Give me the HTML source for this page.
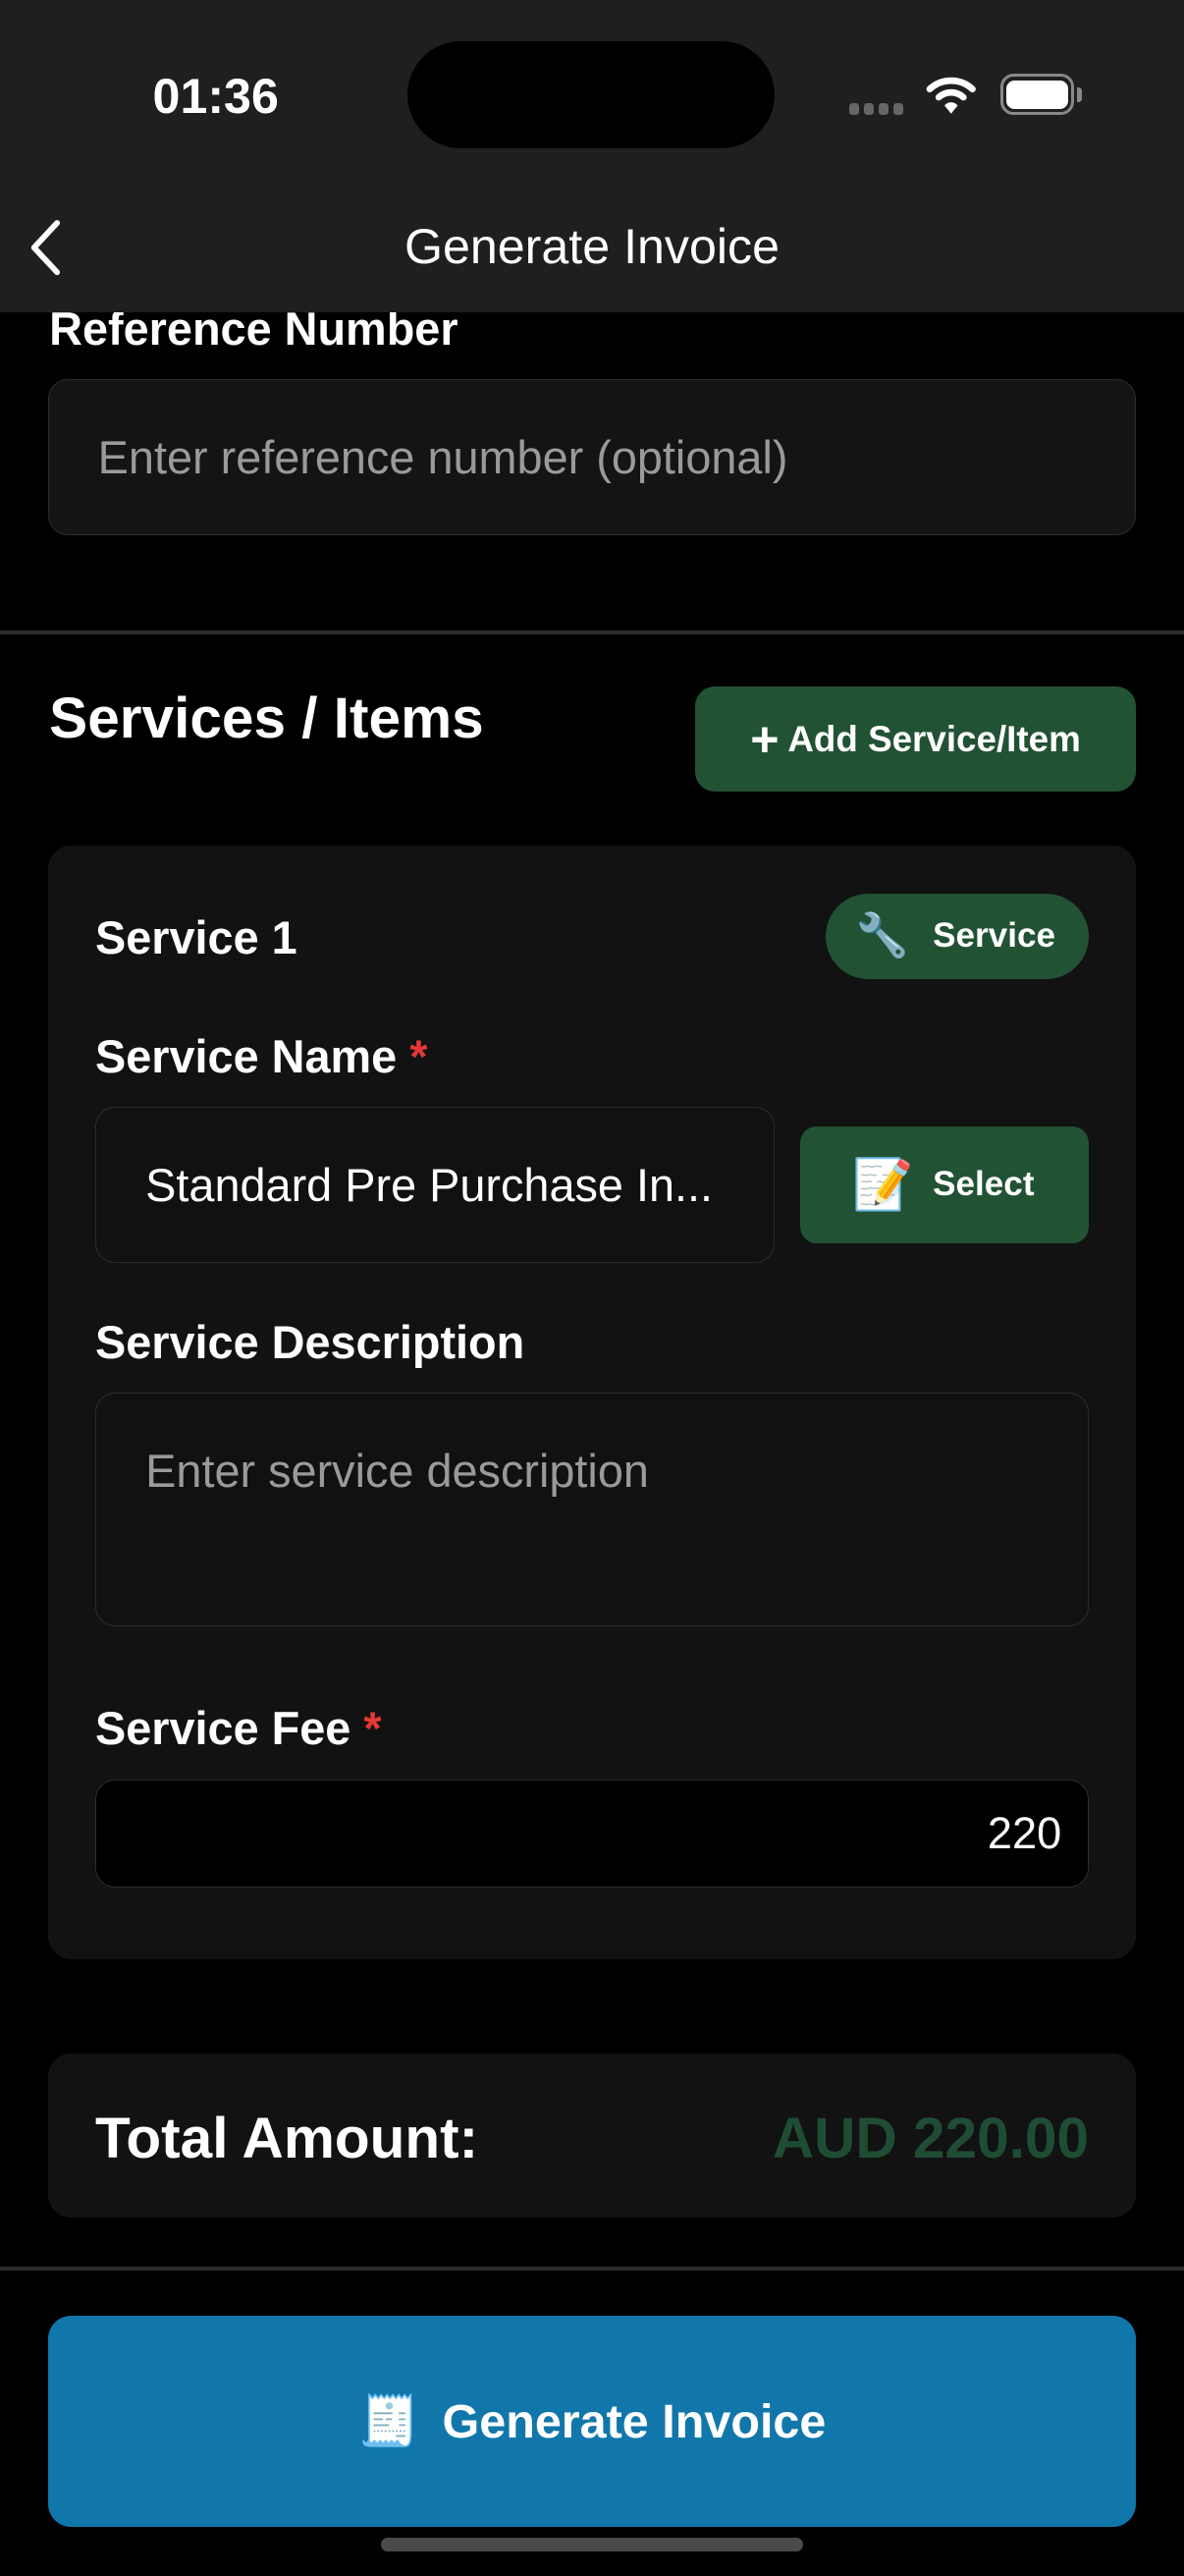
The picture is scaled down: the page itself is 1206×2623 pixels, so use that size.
<!DOCTYPE html>
<html><head><meta charset="utf-8"><style>
html,body{margin:0;padding:0;background:#000;}
body{width:1206px;height:2622px;overflow:hidden;}
#r{width:721px;height:1568px;zoom:1.67268;position:relative;font-family:"Liberation Sans","Noto Sans CJK JP",sans-serif;color:#fff;}
.a{position:absolute;}
.lbl{position:absolute;font-size:28px;font-weight:600;white-space:nowrap;}
.star{color:#e53935;}
.inp{position:absolute;border:1px solid #2c2c2c;border-radius:12px;box-sizing:border-box;}
.ph{color:#9a9a9a;font-size:28px;position:absolute;white-space:nowrap;}
.g{background:#225234;}
</style></head><body><div id="r">
<div class="a" style="left:0;top:0;width:721px;height:190px;background:#1f1f1f;z-index:2">
  <div class="a" style="left:93px;top:41px;font-size:30px;font-weight:600;">01:36</div>
  <div class="a" style="left:248px;top:25px;width:224px;height:65px;background:#000;border-radius:33px;"></div>
  <div class="a" style="left:517px;top:63px;width:34px;height:7px;">
    <span class="a" style="left:0;width:6px;height:7px;background:#666;border-radius:2px"></span>
    <span class="a" style="left:9px;width:6px;height:7px;background:#666;border-radius:2px"></span>
    <span class="a" style="left:18px;width:6px;height:7px;background:#666;border-radius:2px"></span>
    <span class="a" style="left:27px;width:6px;height:7px;background:#666;border-radius:2px"></span>
  </div>
  <svg class="a" style="left:563px;top:44px" width="32" height="26" viewBox="0 0 32 26"><path d="M3 10 A19 19 0 0 1 29 10" stroke="#fff" stroke-width="4" fill="none" stroke-linecap="round"/><path d="M8.5 15 A11 11 0 0 1 23.5 15" stroke="#fff" stroke-width="4" fill="none" stroke-linecap="round"/><path d="M12 20 L16 25 L20 20 A5 5 0 0 0 12 20Z" fill="#fff"/></svg>
  <div class="a" style="left:609px;top:45px;width:45px;height:25px;border:2px solid #888;border-radius:8px;box-sizing:border-box;padding:2px"><div style="width:100%;height:100%;background:#fff;border-radius:5px"></div></div>
  <div class="a" style="left:656px;top:53px;width:3px;height:9px;background:#888;border-radius:0 2px 2px 0"></div>
  <svg class="a" style="left:14px;top:133px" width="26" height="36" viewBox="0 0 26 36"><path d="M21 3 L7 18 L21 33" stroke="#fff" stroke-width="3.5" fill="none" stroke-linecap="round" stroke-linejoin="round"/></svg>
  <div class="a" style="left:0;width:721px;top:133px;text-align:center;font-size:30px;">Generate Invoice</div>
</div>
<div class="lbl" style="left:30px;top:184px;">Reference Number</div>
<div class="inp" style="left:29px;top:231px;width:663px;height:95px;background:#141414;"><div class="ph" style="left:30px;top:31px;">Enter reference number (optional)</div></div>
<div class="a" style="left:0;top:384px;width:721px;height:2px;background:#2a2a2a"></div>
<div class="a" style="left:30px;top:417px;font-size:35px;font-weight:700;">Services / Items</div>
<div class="a g" style="left:423px;top:418px;width:269px;height:64px;border-radius:12px;font-size:22px;font-weight:600;line-height:64px;text-align:center;"><span style="font-size:30px;font-weight:700;vertical-align:-3px">+</span> Add Service/Item</div>
<div class="a" style="left:29px;top:515px;width:663px;height:678px;background:#121212;border-radius:14px;"></div>
<div class="lbl" style="left:58px;top:555px;">Service 1</div>
<div class="a g" style="left:503px;top:544px;width:160px;height:52px;border-radius:26px;font-size:21px;font-weight:600;line-height:52px;"><span style="position:absolute;left:18px;font-size:26px">🔧</span><span style="position:absolute;left:65px">Service</span></div>
<div class="lbl" style="left:58px;top:627px;">Service Name <span class="star">*</span></div>
<div class="inp" style="left:58px;top:674px;width:414px;height:95px;background:#111;"><div class="a" style="left:30px;top:31px;font-size:28px;white-space:nowrap">Standard Pre Purchase In...</div></div>
<div class="a g" style="left:487px;top:686px;width:176px;height:71px;border-radius:10px;font-size:21px;font-weight:600;line-height:71px;"><span style="position:absolute;left:32px;font-size:30px">📝</span><span style="position:absolute;left:81px">Select</span></div>
<div class="lbl" style="left:58px;top:801px;">Service Description</div>
<div class="inp" style="left:58px;top:848px;width:605px;height:142px;background:#111;"><div class="ph" style="left:30px;top:31px;">Enter service description</div></div>
<div class="lbl" style="left:58px;top:1036px;">Service Fee <span class="star">*</span></div>
<div class="inp" style="left:58px;top:1083px;width:605px;height:66px;background:#000;"><div class="a" style="right:16px;top:17px;font-size:27px;">220</div></div>
<div class="a" style="left:29px;top:1250px;width:663px;height:100px;background:#121212;border-radius:14px;"></div>
<div class="a" style="left:58px;top:1282px;font-size:35px;font-weight:700;">Total Amount:</div>
<div class="a" style="right:58px;top:1282px;font-size:35px;font-weight:700;color:#1f4d33;">AUD 220.00</div>
<div class="a" style="left:0;top:1380px;width:721px;height:2px;background:#2a2a2a"></div>
<div class="a" style="left:29px;top:1410px;width:663px;height:128px;background:#1177aa;border-radius:14px;text-align:center;line-height:128px;font-size:29px;font-weight:700;"><span style="font-size:30px;margin-right:14px">🧾</span>Generate Invoice</div>
<div class="a" style="left:232px;top:1545px;width:257px;height:8px;background:#4a4a4a;border-radius:4px"></div>
</div></body></html>
